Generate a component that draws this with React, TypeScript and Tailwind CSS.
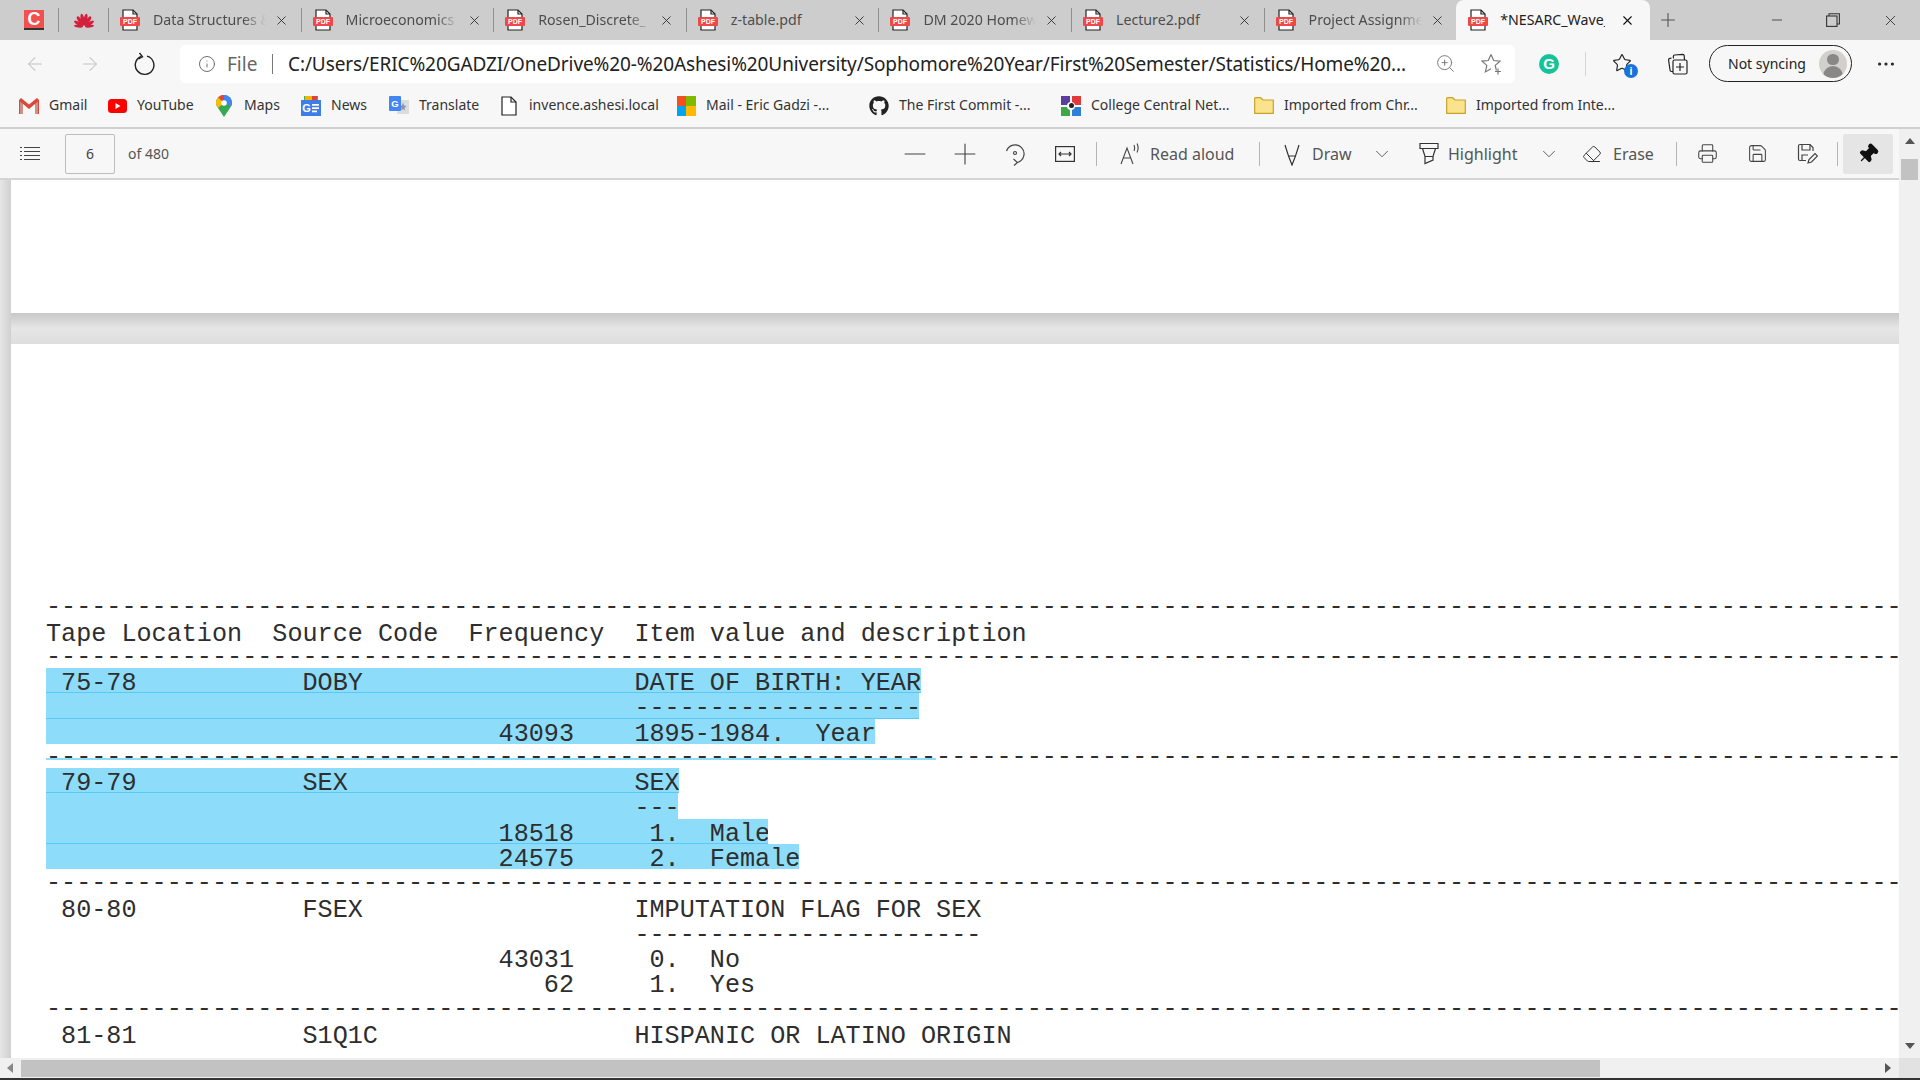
import { ArrowLeft, ArrowRight, ChevronDown, Eraser, Info, Minus, MoreHorizontal, Pin, Plus, Printer, Save, Star, X, ZoomIn } from "lucide-react";
import { FaGithub } from "react-icons/fa";

const UI_FONT = "font-['Noto_Sans',sans-serif]";

function PdfIcon() {
  return (
    <svg width="20" height="22" viewBox="0 0 20 22" className="shrink-0">
      <path d="M3 1h10l4 4v16H3z" fill="#fff" stroke="#222" strokeWidth="1.2" />
      <path d="M13 1v4h4" fill="none" stroke="#222" strokeWidth="1.2" />
      <rect x="0" y="8" width="20" height="9" rx="1" fill="#f04848" />
      <text x="10" y="15.2" textAnchor="middle" fontSize="7" fontWeight="700" fill="#fff" fontFamily="Liberation Sans, sans-serif">PDF</text>
    </svg>
  );
}

function Sep({ className }: { className: string }) {
  return <span className={`w-px shrink-0 ${className}`} />;
}

interface TabProps {
  title: string;
  fade?: boolean;
}

function Tab({ title, fade }: TabProps) {
  return (
    <div className="flex items-center h-full w-[192.6px] shrink-0">
      <Sep className="h-6 bg-[#8f8f8f]" />
      <div className="ml-[11px]">
        <PdfIcon />
      </div>
      <span className={`ml-[13px] w-[113px] overflow-hidden whitespace-nowrap text-[14.2px] text-[#4d4d4d] ${fade ? "[mask-image:linear-gradient(to_right,black_80%,transparent)]" : ""}`}>
        {title}
      </span>
      <X className="ml-2 w-[15px] h-[15px] text-[#333]" strokeWidth={1.5} />
    </div>
  );
}

function TabStrip() {
  return (
    <div className="h-10 flex items-center bg-[#cdcdcd] shrink-0">
      <div className="ml-6 w-5 h-5 bg-[#f2504f] border-b-2 border-[#333] flex items-center justify-center">
        <span className="text-white font-bold text-[18px] leading-none font-['Liberation_Sans',sans-serif]">C</span>
      </div>
      <Sep className="ml-[14px] h-6 bg-[#8f8f8f]" />
      <svg width="20" height="16" viewBox="0 0 20 16" className="ml-[15px]">
        <g fill="#d3213b">
          <ellipse cx="10" cy="7.500" rx="1.900" ry="6" transform="rotate(-11 10 15)" />
          <ellipse cx="10" cy="7.500" rx="1.900" ry="6" transform="rotate(11 10 15)" />
          <ellipse cx="10" cy="8" rx="1.800" ry="5.500" transform="rotate(-33 10 15)" />
          <ellipse cx="10" cy="8" rx="1.800" ry="5.500" transform="rotate(33 10 15)" />
          <ellipse cx="10" cy="8.500" rx="1.600" ry="5" transform="rotate(-58 10 15)" />
          <ellipse cx="10" cy="8.500" rx="1.600" ry="5" transform="rotate(58 10 15)" />
          <ellipse cx="10" cy="9.500" rx="1.200" ry="4.500" transform="rotate(-82 10 15)" />
          <ellipse cx="10" cy="9.500" rx="1.200" ry="4.500" transform="rotate(82 10 15)" />
        </g>
      </svg>
      <div className="ml-[14px] flex h-full">
        <Tab title="Data Structures &" fade />
        <Tab title="Microeconomics" fade />
        <Tab title="Rosen_Discrete_" fade />
        <Tab title="z-table.pdf" />
        <Tab title="DM 2020 Homew" fade />
        <Tab title="Lecture2.pdf" />
        <Tab title="Project Assignme" fade />
      </div>
      <div className="flex items-center h-full w-[194px] shrink-0 bg-[#f7f7f7] rounded-t-lg">
        <div className="ml-3">
          <PdfIcon />
        </div>
        <span className="ml-3 w-[105px] overflow-hidden whitespace-nowrap text-[14.2px] text-[#222]">*NESARC_Wave_</span>
        <X className="ml-[15px] w-[15px] h-[15px] text-[#111]" strokeWidth={1.75} />
      </div>
      <Plus className="ml-[7px] w-[22px] h-[22px] text-[#555]" strokeWidth={1.2} />
      <Minus className="ml-[90px] w-[16px] h-[16px] text-[#333]" strokeWidth={1.25} />
      <svg width="14" height="14" viewBox="0 0 14 14" className="ml-[41px]" fill="none" stroke="#333" strokeWidth="1.1">
        <rect x="0.6" y="3" width="10.4" height="10.4" />
        <path d="M3 3V.8h10.4v10.2H11" />
      </svg>
      <X className="ml-[42px] w-[17px] h-[17px] text-[#333]" strokeWidth={1.25} />
    </div>
  );
}

function AddressRow() {
  return (
    <div className="h-11 flex items-center bg-[#f7f7f7] shrink-0 pl-[7px] pt-[3px]">
      <div className="w-[55px] flex justify-center">
        <ArrowLeft className="w-[22px] h-[22px] text-[#c4c4c4]" strokeWidth={1.1} />
      </div>
      <div className="w-[55px] flex justify-center">
        <ArrowRight className="w-[22px] h-[22px] text-[#c4c4c4]" strokeWidth={1.1} />
      </div>
      <div className="w-[55px] flex justify-center">
        <svg width="22" height="24" viewBox="0 0 22 24" fill="none" stroke="#222" strokeWidth="1.4">
          <path d="M7 4.5a9.3 9.3 0 1 0 6-.4" />
          <path d="M5.5 1l3 3.8-4 2.2" />
        </svg>
      </div>
      <div className="ml-2 w-[1335px] h-[38px] bg-white rounded-md flex items-center text-[#222] shrink-0">
        <Info className="ml-[18px] w-[18px] h-[18px] text-[#666]" strokeWidth={1.25} />
        <span className="ml-[11px] w-[45px] text-[19px] leading-[30px] pt-[1px] text-[#666]">File</span>
        <Sep className="h-[20px] bg-[#777]" />
        <span className="ml-[15px] w-[1119px] whitespace-nowrap overflow-hidden text-[19px] leading-[30px] pt-[1px] tracking-[-0.1px]">
          C:/Users/ERIC%20GADZI/OneDrive%20-%20Ashesi%20University/Sophomore%20Year/First%20Semester/Statistics/Home%20...
        </span>
        <ZoomIn className="ml-[28px] w-[21px] h-[21px] text-[#777]" strokeWidth={1.1} />
        <svg width="22" height="22" viewBox="0 0 22 22" className="ml-[25px] shrink-0" fill="none" stroke="#777" strokeWidth="1.200">
          <path d="M10 1.500l2.700 6 6.300.6-4.800 4.300 1.200 5.100M10 1.500l-2.700 6-6.300.6 4.800 4.300-1.400 6.500 5.600-3.200" />
          <path d="M17 15.500v6M14 18.500h6" />
        </svg>
      </div>
      <div className="ml-6 w-5 h-5 rounded-full bg-[#15c39a] flex items-center justify-center shrink-0">
        <span className="text-white text-[15px] leading-none font-bold font-['Liberation_Sans',sans-serif]">G</span>
      </div>
      <Sep className="ml-[26px] h-6 bg-[#d5d5d5]" />
      <div className="ml-[26px] relative w-[22px] h-[22px] shrink-0">
        <Star className="w-5 h-5 text-[#222]" strokeWidth={1.4} />
        <span className="absolute -right-[4px] -bottom-[3px] w-[14px] h-[14px] rounded-full bg-[#1a73d9] text-white text-[10px] leading-[14px] text-center font-bold">i</span>
      </div>
      <svg width="22" height="22" viewBox="0 0 22 22" className="ml-[33px] shrink-0" fill="none" stroke="#222" strokeWidth="1.2">
        <rect x="6" y="7" width="14" height="14" rx="1.5" />
        <path d="M6 18.5H4.5A1.5 1.5 0 0 1 3 17L1.6 7a1.5 1.5 0 0 1 1.3-1.7l1.6-.2" />
        <path d="M6.5 5.5l-.2-2A1.5 1.5 0 0 1 7.700 2l8-.6a1.500 1.500 0 0 1 1.500 1.300L17.500 7" />
        <path d="M13 10v8M9 14h8" />
      </svg>
      <div className="ml-5 w-[143px] h-[37px] rounded-full border-[1.5px] border-[#222] flex items-center shrink-0">
        <span className="ml-[18px] text-[14px] text-[#222] whitespace-nowrap">Not syncing</span>
        <span className="ml-auto mr-[4px] w-[28px] h-[28px] rounded-full bg-[#d2d0cc] overflow-hidden flex flex-col items-center">
          <span className="mt-[4px] w-[12px] h-[12px] rounded-full bg-[#8a8886]" />
          <span className="mt-[1px] w-[20px] h-[12px] rounded-t-full bg-[#8a8886]" />
        </span>
      </div>
      <MoreHorizontal className="ml-[23px] w-[22px] h-[22px] text-[#222]" strokeWidth={1.5} />
    </div>
  );
}

interface BookmarkProps {
  icon: React.ReactNode;
  label: string;
  className: string;
}

function Bookmark({ icon, label, className }: BookmarkProps) {
  return (
    <div className={`flex items-center shrink-0 ${className}`}>
      <div className="w-5 h-5 flex items-center justify-center">{icon}</div>
      <span className="ml-[10px] text-[14px] leading-5 pb-[2px] text-[#333] whitespace-nowrap">{label}</span>
    </div>
  );
}

function FolderIcon() {
  return (
    <svg width="20" height="17" viewBox="0 0 20 17">
      <path d="M.7 3V1.500C.7 1 1 .7 1.500.7h5L9 3h10.300v13.300H.7z" fill="#fbe38e" stroke="#c9a227" strokeWidth="1.200" />
    </svg>
  );
}

function BookmarksRow() {
  return (
    <div className="h-[43px] flex items-center bg-[#f7f7f7] shrink-0 pl-[19px]">
      <Bookmark
        className="w-[88px]"
        label="Gmail"
        icon={
          <svg width="20" height="16" viewBox="0 0 20 16">
            <path d="M0 2v14h4V6l6 5 6-5v10h4V2l-2-2-8 6.500L2 0z" fill="#d9483b" />
            <path d="M4 6v10H1V3.500zM16 6v10h3V3.500z" fill="#c8c8c8" opacity=".55" />
          </svg>
        }
      />
      <Bookmark
        className="w-[107px]"
        label="YouTube"
        icon={
          <svg width="19" height="14" viewBox="0 0 19 14">
            <rect width="19" height="14" rx="3.500" fill="#f00" />
            <path d="M7.500 4l5 3-5 3z" fill="#fff" />
          </svg>
        }
      />
      <Bookmark
        className="w-[87px]"
        label="Maps"
        icon={
          <svg width="16" height="22" viewBox="0 0 16 22">
            <path d="M8 0a8 8 0 0 1 8 8c0 2-1 3.500-2 5l-6 9-6-9C1 11.500 0 10 0 8a8 8 0 0 1 8-8z" fill="#34a853" />
            <path d="M2.300 2.300L8 8 2 13C1 11.500 0 10 0 8c0-2.200.9-4.200 2.300-5.700z" fill="#fbbc04" />
            <path d="M2.300 2.300A8 8 0 0 1 8 0l3 3-3 5z" fill="#ea4335" />
            <path d="M8 0a8 8 0 0 1 8 8c0 1.200-.4 2.300-1 3.300L8 8z" fill="#4285f4" />
            <circle cx="8" cy="8" r="2.800" fill="#fff" />
          </svg>
        }
      />
      <Bookmark
        className="w-[88px]"
        label="News"
        icon={
          <svg width="20" height="20" viewBox="0 0 20 20">
            <path d="M3 0h14v6H3z" fill="#4caf50" />
            <path d="M4 0h7v4H4z" fill="#f4b400" />
            <path d="M11 0h5v4h-5z" fill="#db4437" />
            <rect y="4" width="20" height="16" fill="#3f7ee8" />
            <text x="5.500" y="16" textAnchor="middle" fontSize="11" fontWeight="700" fill="#fff" fontFamily="Liberation Sans, sans-serif">G</text>
            <path d="M11 8h7v1.800h-7zM11 11.200h7V13h-7zM11 14.400h5v1.800h-5z" fill="#fff" />
          </svg>
        }
      />
      <Bookmark
        className="w-[110px]"
        label="Translate"
        icon={
          <svg width="20" height="20" viewBox="0 0 20 20">
            <rect x="8" y="4" width="12" height="14" rx="1" fill="#dcdcdc" />
            <path d="M14 6.500l1 3 2.500.5-2 1.800.5 2.700-2-1.400-2 1.400.5-2.700-2-1.800 2.500-.5z" fill="#8a94a6" />
            <rect width="12" height="15" rx="1" fill="#4285f4" />
            <text x="6" y="11" textAnchor="middle" fontSize="9.500" fontWeight="700" fill="#fff" fontFamily="Liberation Sans, sans-serif">G</text>
          </svg>
        }
      />
      <Bookmark
        className="w-[177px]"
        label="invence.ashesi.local"
        icon={
          <svg width="16" height="20" viewBox="0 0 16 20" fill="#fff" stroke="#222" strokeWidth="1.200">
            <path d="M1 1h9l5 5v13H1z" />
            <path d="M10 1v5h5" fill="none" />
          </svg>
        }
      />
      <Bookmark
        className="w-[193px]"
        label="Mail - Eric Gadzi -..."
        icon={
          <span className="grid grid-cols-2 w-[19px] h-[20px]">
            <span className="bg-[#f25022]" />
            <span className="bg-[#7fba00]" />
            <span className="bg-[#00a4ef]" />
            <span className="bg-[#ffb900]" />
          </span>
        }
      />
      <Bookmark className="w-[192px]" label="The First Commit -..." icon={<FaGithub className="w-[20px] h-[20px] text-[#222]" />} />
      <Bookmark
        className="w-[193px]"
        label="College Central Net..."
        icon={
          <span className="relative grid grid-cols-2 gap-[2px] w-[20px] h-[20px]">
            <span className="bg-[#5b3fa0]" />
            <span className="bg-[#e03a3a]" />
            <span className="bg-[#3fa845]" />
            <span className="bg-[#2f7fd6]" />
            <span className="absolute left-[6px] top-[6px] w-[8px] h-[8px] rounded-full bg-white flex items-center justify-center">
              <span className="w-[5px] h-[5px] rounded-full bg-[#222]" />
            </span>
          </span>
        }
      />
      <Bookmark className="w-[192px]" label="Imported from Chr..." icon={<FolderIcon />} />
      <Bookmark className="w-[192px]" label="Imported from Inte..." icon={<FolderIcon />} />
    </div>
  );
}

function ToolSlot({ children }: { children: React.ReactNode }) {
  return <div className="w-[50px] flex justify-center shrink-0 text-[#444]">{children}</div>;
}

function PdfToolbar() {
  const label = "text-[16px] text-[#555] whitespace-nowrap shrink-0";
  return (
    <div className="h-[51px] flex items-center bg-[#f7f7f7] border-b-2 border-[#d4d4d4] shrink-0 pl-5 pr-[6px]">
      <svg width="20" height="16" viewBox="0 0 20 16" className="shrink-0" fill="none" stroke="#444" strokeWidth="1.100">
        <path d="M4 1.500h16M4 5.500h16M4 9.500h16M4 13.500h16" />
        <path d="M0 1.500h2M0 5.500h2M0 9.500h2M0 13.500h2" />
      </svg>
      <div className="ml-[25px] w-[50px] h-10 border border-[#bdbdbd] rounded-[2px] flex items-center justify-center text-[14px] text-[#444] shrink-0">6</div>
      <span className="ml-[13px] text-[14px] text-[#555] shrink-0">of 480</span>
      <div className="flex-1" />
      <ToolSlot>
        <Minus className="w-[34px] h-[34px]" strokeWidth={0.8} />
      </ToolSlot>
      <ToolSlot>
        <Plus className="w-[34px] h-[34px]" strokeWidth={0.8} />
      </ToolSlot>
      <ToolSlot>
        <svg width="22" height="24" viewBox="0 0 22 24" fill="none" stroke="#444" strokeWidth="1.200">
          <path d="M2.500 9a9 9 0 1 1 11 11.500" />
          <path d="M9.500 17l4 3.500-3.500 3" />
          <circle cx="11" cy="11" r="1.500" />
        </svg>
      </ToolSlot>
      <ToolSlot>
        <svg width="20" height="16" viewBox="0 0 20 16" fill="none" stroke="#333" strokeWidth="1.200">
          <rect x=".6" y=".6" width="18.800" height="14.800" />
          <path d="M4 8h12M6 6L4 8l2 2M14 6l2 2-2 2" />
        </svg>
      </ToolSlot>
      <Sep className="ml-[6px] h-6 bg-[#b5b5b5]" />
      <svg width="20" height="22" viewBox="0 0 20 22" className="ml-[23px] shrink-0" fill="none" stroke="#444" strokeWidth="1.100">
        <path d="M1 21L7 5l6 16M3.300 15h7.500" />
        <path d="M14 2a7 7 0 0 1 0 6M17 .500a10 10 0 0 1 0 9" />
      </svg>
      <span className={`ml-[10px] w-[87px] ${label}`}>Read aloud</span>
      <Sep className="ml-[22px] h-6 bg-[#b5b5b5]" />
      <svg width="16" height="24" viewBox="0 0 16 24" className="ml-6 shrink-0" fill="none" stroke="#333" strokeWidth="1.200">
        <path d="M1 3l3.500 11h7L15 3M4.500 14L8 23l3.500-9" />
      </svg>
      <span className={`ml-3 w-[42px] ${label}`}>Draw</span>
      <ChevronDown className="ml-[17px] w-[22px] h-[22px] text-[#555]" strokeWidth={1} />
      <svg width="20" height="24" viewBox="0 0 20 24" className="ml-[26px] shrink-0" fill="none" stroke="#333" strokeWidth="1.200">
        <path d="M1 1.500h18v5H1zM3.500 6.500l2.500 8h8l2.500-8M6 14.500v7l8-3.500v-3.500" />
      </svg>
      <span className={`ml-[9px] w-[73px] ${label}`}>Highlight</span>
      <ChevronDown className="ml-[17px] w-[22px] h-[22px] text-[#555]" strokeWidth={1} />
      <Eraser className="ml-[22px] w-5 h-5 text-[#333]" strokeWidth={1.2} />
      <span className={`ml-[11px] w-10 ${label}`}>Erase</span>
      <Sep className="ml-[23px] h-6 bg-[#b5b5b5]" />
      <div className="ml-[5px]">
        <ToolSlot>
          <Printer className="w-[21px] h-[21px]" strokeWidth={1.2} />
        </ToolSlot>
      </div>
      <ToolSlot>
        <Save className="w-[21px] h-[21px]" strokeWidth={1.2} />
      </ToolSlot>
      <ToolSlot>
        <svg width="21" height="21" viewBox="0 0 21 21" fill="none" stroke="#444" strokeWidth="1.200">
          <path d="M9 17.500H3A1.500 1.500 0 0 1 1.500 16V3A1.500 1.500 0 0 1 3 1.500h10l3 3V8" />
          <path d="M5 1.500V7h8V1.500M5 17v-5h6" />
          <path d="M11 20l1-3.500 6-6 2.500 2.500-6 6z" />
        </svg>
      </ToolSlot>
      <Sep className="ml-[5px] h-6 bg-[#b5b5b5]" />
      <div className="ml-[5px] w-[50px] h-10 bg-[#e5e5e5] rounded-[2px] flex items-center justify-center shrink-0">
        <Pin className="w-[22px] h-[22px] text-[#111] fill-[#111] rotate-45" strokeWidth={1.4} />
      </div>
    </div>
  );
}

const DASHES = "-".repeat(123);

function line(loc: string, code: string, freq: string, item: string) {
  return ` ${loc}`.padEnd(17) + code.padEnd(13) + freq.padStart(5) + "    " + item;
}

function DashRow() {
  return <div className="h-[25.125px] leading-[25.125px]">{DASHES}</div>;
}

function TextRow({ children }: { children: string }) {
  return <div className="h-[25.125px] leading-[29px]">{children}</div>;
}

function MarkRow({ children, className }: { children: string; className: string }) {
  return <div className={`h-[25.33px] leading-[32px] overflow-hidden ${className}`}>{children}</div>;
}

function DocumentText() {
  return (
    <div className="pl-[35px] pt-[251px] whitespace-pre text-[25.15px] text-[#2e2e2e] font-['Liberation_Mono',monospace]">
      <DashRow />
      <TextRow>Tape Location  Source Code  Frequency  Item value and description</TextRow>
      <DashRow />
      <div className="-mt-[2.5px] mb-[1.6px]">
        <MarkRow className="w-[875px] bg-[#8cdcfa] border-b border-[#5cc8f5]">{line("75-78", "DOBY", "", "DATE OF BIRTH: YEAR")}</MarkRow>
        <MarkRow className="w-[873px] bg-[#8cdcfa] border-b border-[#5cc8f5]">{line("", "", "", "-------------------")}</MarkRow>
        <MarkRow className="w-[829px] bg-[#8cdcfa]">{line("", "", "43093", "1895-1984.  Year")}</MarkRow>
      </div>
      <div className="relative h-[25.125px] leading-[25.125px]">
        <span className="absolute left-0 top-[13px] w-[890px] h-[2px] bg-[#8cdcfa]" />
        <span className="relative">{DASHES}</span>
      </div>
      <div className="-mt-[2.5px] mb-[1.6px]">
        <MarkRow className="w-[633px] bg-[#8cdcfa] border-b border-[#5cc8f5]">{line("79-79", "SEX", "", "SEX")}</MarkRow>
        <MarkRow className="w-[632px] bg-[#8cdcfa]">{line("", "", "", "---")}</MarkRow>
        <MarkRow className="w-[722px] bg-[#8cdcfa] border-b border-[#5cc8f5]">{line("", "", "18518", " 1.  Male")}</MarkRow>
        <MarkRow className="w-[753px] bg-[#8cdcfa]">{line("", "", "24575", " 2.  Female")}</MarkRow>
      </div>
      <DashRow />
      <TextRow>{line("80-80", "FSEX", "", "IMPUTATION FLAG FOR SEX")}</TextRow>
      <TextRow>{line("", "", "", "-----------------------")}</TextRow>
      <TextRow>{line("", "", "43031", " 0.  No")}</TextRow>
      <TextRow>{line("", "", "62", " 1.  Yes")}</TextRow>
      <DashRow />
      <TextRow>{line("81-81", "S1Q1C", "", "HISPANIC OR LATINO ORIGIN")}</TextRow>
    </div>
  );
}

function Viewer() {
  return (
    <div className="flex-1 min-h-0 flex bg-[#e4e4e4]">
      <div className="w-[11px] shrink-0 bg-gradient-to-r from-[#e6e6e6] to-[#d0d0d0]" />
      <div className="flex-1 min-w-0 flex flex-col">
        <div className="h-[133px] shrink-0 bg-white" />
        <div className="h-[31px] shrink-0 bg-gradient-to-b from-[#c8c8c8] via-[#e6e6e6] to-[#dedede]" />
        <div className="flex-1 min-h-0 bg-white overflow-hidden">
          <DocumentText />
        </div>
      </div>
    </div>
  );
}

function HorizontalScrollbar() {
  return (
    <div className="h-5 shrink-0 bg-[#f0f0f0] flex items-center">
      <svg width="6" height="10" viewBox="0 0 6 10" className="ml-[7px] shrink-0">
        <path d="M6 0v10L0 5z" fill="#888" />
      </svg>
      <div className="ml-2 w-[1579px] h-[17px] bg-[#c2c2c2]" />
      <svg width="6" height="10" viewBox="0 0 6 10" className="ml-auto mr-2 shrink-0">
        <path d="M0 0v10l6-5z" fill="#555" />
      </svg>
    </div>
  );
}

function VerticalScrollbar() {
  return (
    <div className="w-[21px] shrink-0 bg-[#f0f0f0] flex flex-col items-center">
      <svg width="10" height="6" viewBox="0 0 10 6" className="mt-[9px] shrink-0">
        <path d="M0 6h10L5 0z" fill="#555" />
      </svg>
      <div className="mt-[15px] w-[17px] h-[21px] bg-[#c2c2c2]" />
      <svg width="10" height="6" viewBox="0 0 10 6" className="mt-auto mb-[9px] shrink-0">
        <path d="M0 0h10L5 6z" fill="#555" />
      </svg>
      <div className="w-full h-5 bg-[#e2e2e2]" />
    </div>
  );
}

export default function App() {
  return (
    <div className={`w-[1920px] h-[1080px] flex flex-col overflow-hidden bg-white ${UI_FONT}`}>
      <TabStrip />
      <AddressRow />
      <BookmarksRow />
      <div className="h-[2px] shrink-0 bg-[#d0d0d0]" />
      <div className="flex-1 min-h-0 flex">
        <div className="flex-1 min-w-0 flex flex-col">
          <PdfToolbar />
          <Viewer />
          <HorizontalScrollbar />
        </div>
        <VerticalScrollbar />
      </div>
      <div className="h-[2px] shrink-0 bg-[#333]" />
    </div>
  );
}
